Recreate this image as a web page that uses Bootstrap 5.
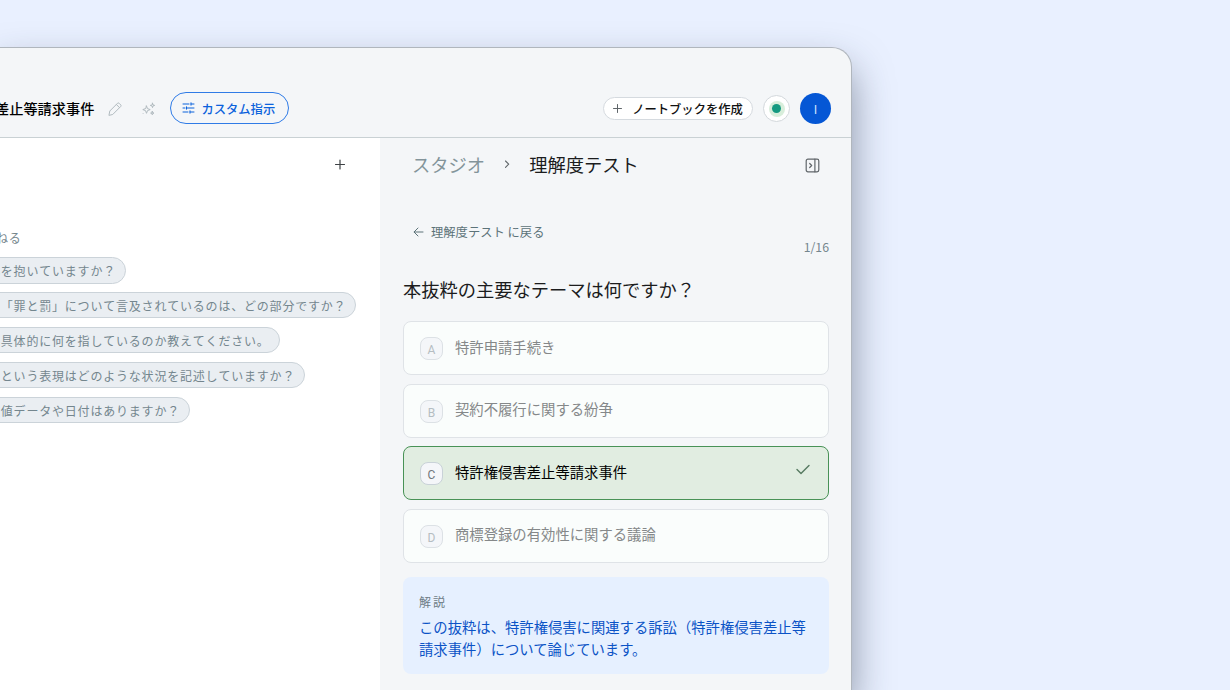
<!DOCTYPE html>
<html lang="ja">
<head>
<meta charset="utf-8">
<meta name="viewport" content="width=device-width, initial-scale=1">
<title>理解度テスト</title>
<link href="https://cdn.jsdelivr.net/npm/bootstrap@5.3.0/dist/css/bootstrap.min.css" rel="stylesheet">
<style>
body{background:#e9f0ff;font-family:"Noto Sans CJK JP",sans-serif;color:#1b1c1d;height:100vh;overflow:hidden;line-height:1.5}
svg{display:block;flex:none;fill:none;stroke:currentColor;stroke-linecap:round;stroke-linejoin:round}
.ic-pale{color:#b0babf}
.ic-grey{color:#60666a}
.ic-dark{color:#3d4144}
.ic-check{color:#55795f}
.app-window{width:852px;height:643px;margin-top:47px;background:#f4f6f8;border:1px solid #b0b6bd;border-left:0;border-bottom:0;border-radius:0 20px 0 0;box-shadow:0 20px 38px rgba(42,54,76,.5);overflow:hidden}
.topbar{height:90px;padding:32px 20px 0 0;border-bottom:1px solid #c9d1d4}
.doc-title{font-size:14.2px;font-weight:500;color:#000;margin-left:-5px;margin-right:14px}
.tune-btn{height:32px;width:119px;border:1px solid #2f7be6;border-radius:16px;color:#0b62dc;font-size:12.3px;font-weight:500;margin:-1px 0 0 12px;gap:6px;padding:0}
.tune-btn span{margin-top:2px}
.tune-btn svg{margin-left:-2px}
.create-btn{height:23px;width:150px;border:1px solid #d5dadf;border-radius:12px;background:#fff;color:#111;font-size:12.3px;font-weight:500;gap:10px;padding:0}
.create-btn span{margin-top:2px}
.status-ring{width:27px;height:27px;border:1px solid #d3d8dc;background:#fff;margin-left:10px}
.status-halo{width:16px;height:16px;background:#d8eedb}
.status-dot{width:9px;height:9px;background:#159a80}
.avatar{width:31px;height:31px;background:#0557d5;color:#dbe8ff;font-size:12px;margin-left:10px}
.chat-pane{width:380px;background:#fff}
.ask-label{font-size:12px;letter-spacing:.8px;color:#75868d;margin-left:-4px;line-height:18px;margin-top:58px}
.chips{margin-left:-25px;margin-top:10px;gap:8.4px;font-kerning:none}
.chip{height:26.5px;border:1px solid #cbd3d9;border-radius:14px;background:#eaeef2;color:#74868e;font-size:12px;letter-spacing:.8px;padding:0 9px 0 12px;line-height:25px}
.chip.wide-start{padding-left:24.8px}
.studio-pane{padding:0 22px 0 23px}
.crumbs{font-size:18.3px;height:54px;padding:0 9px}
.crumb-parent{color:#83949a}
.back-link{font-size:12.3px;color:#5c7379;gap:7px;margin-left:10px;line-height:18px;margin-top:31px}
.page-count{font-size:12.3px;color:#74868e;line-height:18px;margin-top:-3.5px}
.question{font-size:18.25px;line-height:28px;margin:19.5px 0 18px}
.choices{gap:8.5px}
.choice{height:54px;border:1px solid #dfe3e7;border-radius:8px;background:#fafdfc;padding:0 16px;font-size:14.35px;color:#858889;gap:12px}
.choice .label-text{margin-top:-3px}
.choice.correct{background:#e1ede1;border-color:#489256;color:#000}
.key{width:23px;height:23px;border:1px solid #dce1e5;border-radius:8px;background:#f4f6f9;font-size:12px;color:#b5bdc2;line-height:24px;font-family:Roboto,sans-serif;margin-top:1px}
.correct .key{color:#71777b;border-color:#c9d2d8}
.explain{background:#e6f0ff;border-radius:8px;height:97px;margin-top:14.5px;padding:16px 16px 0;color:#0b53c6;font-size:14.34px;line-height:22.3px}
.explain-head{font-size:12px;letter-spacing:2px;color:#6e7d86;line-height:18px;margin-bottom:4.5px}
</style>
</head>
<body>
<main class="app-window d-flex flex-column">
  <header class="topbar d-flex align-items-center flex-shrink-0">
    <div class="doc-title text-nowrap">差止等請求事件</div>
    <svg class="ic-pale" width="14" height="14" viewBox="0 0 14 14" stroke-width="1"><path d="M1 13l.8-4L9.6 1.2q.7-.6 1.4 0l1.8 1.8q.6.7 0 1.4L5 12.2zM8.4 2.5l3.1 3.1"/></svg>
    <svg class="ic-pale ms-3" width="20" height="16" viewBox="0 0 20 16" stroke-width="1"><path d="M8.5 5l1 2.6 2.7 1-2.7 1-1 2.7-1-2.7-2.7-1 2.7-1zM14.5 2.2l.5 1.7 1.7.5-1.7.5-.5 1.7-.5-1.7-1.7-.5 1.7-.5zM14.3 10.4l.4 1.3 1.3.4-1.3.4-.4 1.3-.4-1.3-1.3-.4 1.3-.4zM5.2 12.6l.1.1"/></svg>
    <button class="btn tune-btn d-flex align-items-center justify-content-center" type="button">
      <svg width="13" height="12" viewBox="0 0 13 12" stroke-width="1"><path d="M1 2h6M9 2h3M9 .8v2.4M1 6h2M5 6h7M4.5 4.8v2.4M1 10h5M8 10h4M8 8.8v2.4"/></svg>
      <span>カスタム指示</span>
    </button>
    <button class="btn create-btn d-flex align-items-center justify-content-center ms-auto" type="button">
      <svg class="ic-grey" width="9" height="9" viewBox="0 0 9 9" stroke-width="1"><path d="M4.5 .5v8M.5 4.5h8"/></svg>
      <span>ノートブックを作成</span>
    </button>
    <div class="status-ring rounded-circle d-flex align-items-center justify-content-center"><div class="status-halo rounded-circle d-flex align-items-center justify-content-center"><div class="status-dot rounded-circle"></div></div></div>
    <div class="avatar rounded-circle d-flex align-items-center justify-content-center">I</div>
  </header>
  <div class="d-flex flex-grow-1">
    <section class="chat-pane flex-shrink-0">
      <div class="d-flex justify-content-end pt-3 pe-3">
        <svg class="ic-dark me-3 mt-1" width="16" height="13" viewBox="0 0 16 13" stroke-width="1.2"><path d="M8 2v9M3.5 6.5h9"/></svg>
      </div>
      <div class="ask-label">ねる</div>
      <div class="chips d-flex flex-column align-items-start text-nowrap">
        <div class="chip">心を抱いていますか？</div>
        <div class="chip wide-start">「罪と罰」について言及されているのは、どの部分ですか？</div>
        <div class="chip">が具体的に何を指しているのか教えてください。</div>
        <div class="chip">」という表現はどのような状況を記述していますか？</div>
        <div class="chip">数値データや日付はありますか？</div>
      </div>
    </section>
    <section class="studio-pane flex-grow-1">
      <div class="crumbs d-flex align-items-center">
        <span class="crumb-parent">スタジオ</span>
        <svg class="ic-grey mx-3" width="12" height="10" viewBox="0 0 12 10" stroke-width="1.1"><path d="M4.5 1L7.7 4.2 4.5 7.4"/></svg>
        <span>理解度テスト</span>
        <svg class="ic-grey ms-auto" width="15" height="15" viewBox="0 0 15 15" stroke-width="1.2"><rect x="1.2" y="1.2" width="12.6" height="12.6" rx="1.7"/><path d="M9.9 1.2v12.6M4.7 5.5l2 2-2 2"/></svg>
      </div>
      <div class="back-link d-flex align-items-center">
        <svg width="11" height="10" viewBox="0 0 11 10" stroke-width="1"><path d="M10 5H1.2M5 1L1 5l4 4"/></svg>
        <span>理解度テスト に戻る</span>
      </div>
      <div class="page-count text-end">1/16</div>
      <h1 class="question fw-normal">本抜粋の主要なテーマは何ですか？</h1>
      <div class="choices d-flex flex-column">
        <div class="choice d-flex align-items-center"><span class="key text-center">A</span><span class="label-text">特許申請手続き</span></div>
        <div class="choice d-flex align-items-center"><span class="key text-center">B</span><span class="label-text">契約不履行に関する紛争</span></div>
        <div class="choice correct d-flex align-items-center"><span class="key text-center">C</span><span class="label-text">特許権侵害差止等請求事件</span>
          <svg class="ic-check ms-auto mb-2" width="18" height="14" viewBox="0 0 18 14" stroke-width="1.4"><path d="M3 7.5L7 11.5 15 3.4"/></svg></div>
        <div class="choice d-flex align-items-center"><span class="key text-center">D</span><span class="label-text">商標登録の有効性に関する議論</span></div>
      </div>
      <div class="explain">
        <div class="explain-head">解説</div>
        <div>この抜粋は、特許権侵害に関連する訴訟（特許権侵害差止等<br>請求事件）について論じています。</div>
      </div>
    </section>
  </div>
</main>
</body>
</html>
